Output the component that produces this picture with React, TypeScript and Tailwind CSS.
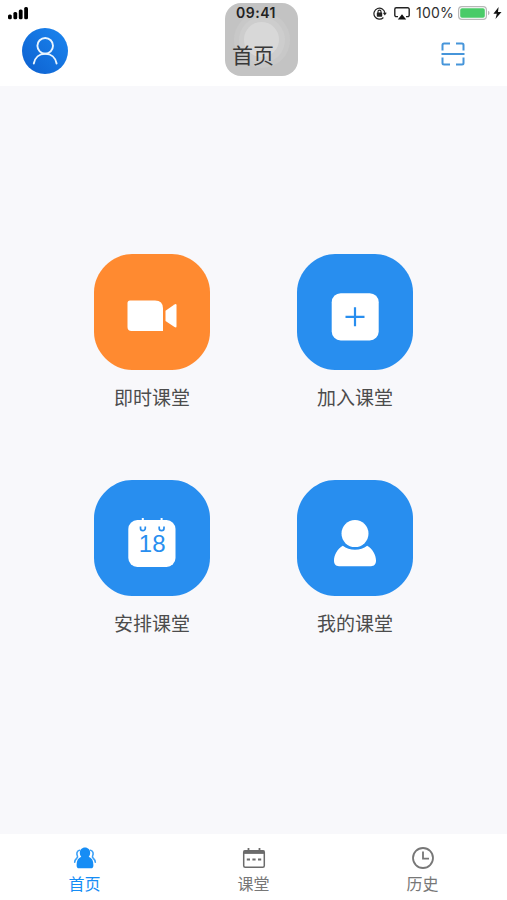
import type { ReactNode } from "react";

const BLUE = "#288eef";

function Signal() {
  return (
    <svg width="20" height="13" viewBox="0 0 20 13" fill="#000">
      <rect x="0" y="7.4" width="3.8" height="4.8" rx="1.5" />
      <rect x="5.4" y="5" width="3.8" height="7.2" rx="1.5" />
      <rect x="10.8" y="2.6" width="3.8" height="9.6" rx="1.5" />
      <rect x="16.2" y="0" width="3.8" height="12.2" rx="1.5" />
    </svg>
  );
}

function RotationLock() {
  return (
    <svg width="14" height="13" viewBox="0 0 14 13" fill="none" stroke="#222">
      <path d="M10.4 10.5A5.5 5.5 0 1 1 11.9 6" strokeWidth="1.2" />
      <path d="M9.8 5.8h4l-2 2.8z" fill="#222" stroke="none" />
      <rect x="3.8" y="5.5" width="5.4" height="4.2" rx=".6" fill="#222" stroke="none" />
      <path d="M5 6V4.6a1.5 1.5 0 0 1 3 0V6" strokeWidth="1.1" />
    </svg>
  );
}

function AirPlay() {
  return (
    <svg width="16" height="13" viewBox="0 0 16 13">
      <path d="M4 9.6H2.2A1.4 1.4 0 0 1 .8 8.2V2.2A1.4 1.4 0 0 1 2.2.8h11.6a1.4 1.4 0 0 1 1.4 1.4v6a1.4 1.4 0 0 1-1.4 1.4H12" fill="none" stroke="#222" strokeWidth="1.4" />
      <path d="M8 7.2 12.2 12.4H3.8z" fill="#111" />
    </svg>
  );
}

function Battery() {
  return (
    <svg width="32" height="14" viewBox="0 0 32 14">
      <rect x=".6" y=".6" width="27.8" height="12.8" rx="3.3" fill="#fff" stroke="#b8b8b8" strokeWidth="1.2" />
      <rect x="2.2" y="2.2" width="24.6" height="9.6" rx="1.8" fill="#4acb68" />
      <path d="M30 4.8q1.6.6 1.6 2.2T30 9.2z" fill="#b8b8b8" />
    </svg>
  );
}

function Avatar() {
  return (
    <svg width="46" height="46" viewBox="0 0 46 46">
      <defs>
        <linearGradient id="avatar" x1="0" y1="1" x2="1" y2="0">
          <stop offset="0" stopColor="#0d60cf" />
          <stop offset="1" stopColor="#1b86f0" />
        </linearGradient>
      </defs>
      <circle cx="23" cy="23" r="23" fill="url(#avatar)" />
      <g fill="none" stroke="#e9f5ff" strokeWidth="1.9" strokeLinecap="round">
        <circle cx="23.2" cy="17.8" r="7.8" />
        <path d="M11.8 35.5c1-6 5.5-9.8 11.4-9.8s10.4 3.8 11.4 9.8" />
      </g>
    </svg>
  );
}

function Scan() {
  return (
    <svg width="24" height="24" viewBox="0 0 24 24" fill="none" stroke="#4695da" strokeWidth="2">
      <path d="M9 1.5H3Q1.5 1.5 1.5 3v5.5M15 1.5h6q1.5 0 1.5 1.5v5.5M1.5 15.5V21q0 1.500 1.500 1.500h6M15 22.5h6q1.500 0 1.500-1.500v-5.500M.5 12h23" />
    </svg>
  );
}

function Tile({ label, color, children }: { label: string; color: string; children: ReactNode }) {
  return (
    <button className="flex w-[116px] flex-col items-center">
      <svg width="116" height="116" viewBox="0 0 116 116">
        <path
          d="M38 0H78C98 0 116 18 116 38V78C116 98 98 116 78 116H38C18 116 0 98 0 78V38C0 18 18 0 38 0Z"
          fill={color}
        />
        {children}
      </svg>
      <span className="mt-[15px] h-7 text-[19px] leading-7 text-[#4c4c4c]">{label}</span>
    </button>
  );
}

function HomeIcon() {
  return (
    <svg width="24" height="24" viewBox="0 0 24 24">
      <g fill="none" stroke="#3ea1f7" strokeWidth="1.6" strokeLinecap="round">
        <path d="M6.5 4.200C3.800 4.800 3.300 7.800 4.400 9.800c.5 1 .2 1.600-.6 2.300C2.600 13.200 1.800 14.500 1.700 16.200" />
        <path d="M17.500 4.200c2.700.6 3.200 3.600 2.100 5.600-.5 1-.2 1.600.6 2.300 1.200 1.100 2 2.400 2.100 4.100" />
      </g>
      <path d="M12 1.500c3.100 0 5.200 2.300 5.200 5.200 0 1.700-.6 3-1.500 4 3.200 1.200 4.700 3.700 4.700 8.200 0 2.400-.7 3.400-2.500 3.400H6.100c-1.800 0-2.500-1-2.500-3.400 0-4.500 1.500-7 4.700-8.200-.9-1-1.500-2.300-1.500-4C6.800 3.800 8.900 1.500 12 1.500z" fill="#168df5" />
    </svg>
  );
}

function CalendarIcon() {
  return (
    <svg width="24" height="24" viewBox="0 0 24 24" fill="none" stroke="#6b6b6b">
      <rect x="1.7" y="4.7" width="20.6" height="16.6" rx="1.5" strokeWidth="1.5" />
      <path d="M1.7 6.2h20.6" strokeWidth="3.4" />
      <path d="M6.5 2v4M17.5 2v4" strokeWidth="1.8" />
      <path d="M4.800 13.500h3.200M10.400 13.500h3.200M16 13.500h3.200" strokeWidth="1.8" />
    </svg>
  );
}

function ClockIcon() {
  return (
    <svg width="24" height="24" viewBox="0 0 24 24" fill="none" stroke="#777" strokeWidth="1.8">
      <circle cx="12" cy="12" r="10" />
      <path d="M12 5.5v7.2h6" />
    </svg>
  );
}

function Tab({ label, active, children }: { label: string; active?: boolean; children: ReactNode }) {
  return (
    <button className={`flex flex-1 flex-col items-center pt-3 ${active ? "text-[#168df5]" : "text-[#777777]"}`}>
      {children}
      <span className="mt-0.5 text-[16px] leading-6">{label}</span>
    </button>
  );
}

export default function App() {
  return (
    <div className="flex h-[900px] w-[507px] flex-col overflow-hidden bg-[#f8f8fb] font-['Inter','Noto_Sans_CJK_SC',sans-serif]">
      <header className="relative h-[86px] shrink-0 bg-white">
        <div className="absolute left-[225px] top-[3px] flex h-[73px] w-[73px] items-center justify-center rounded-[16px] bg-[#c3c3c3]">
          <div className="flex size-[56px] items-center justify-center rounded-full bg-[#c8c8c8]">
            <div className="flex size-[46px] items-center justify-center rounded-full bg-[#cdcdcd]">
              <div className="size-[35px] rounded-full bg-[#d8d8d8]" />
            </div>
          </div>
        </div>
        <div className="relative grid h-[26px] grid-cols-3 items-center pl-[8px] pr-[5px]">
          <Signal />
          <span className="ml-[2px] justify-self-center text-[14px] font-semibold leading-5 tracking-[0.5px] text-[#222]">09:41</span>
          <div className="flex items-center justify-end">
            <RotationLock />
            <span className="ml-[7px]"><AirPlay /></span>
            <span className="ml-[6px] w-[39px] whitespace-nowrap text-[14px] leading-5 tracking-[0.2px] text-[#303030]">100%</span>
            <span className="ml-[3px]"><Battery /></span>
            <svg className="ml-[3px]" width="9" height="12" viewBox="0 0 9 12"><path d="M5.6 0 .4 6.700h3.400L2.500 12l6-7H5z" fill="#111" /></svg>
          </div>
        </div>
        <div className="relative flex h-[60px] justify-between pl-[22px] pr-[42px]">
          <div className="mt-[2px]"><Avatar /></div>
          <h1 className="-ml-[3px] mt-[14px] text-[21px] leading-8 text-[#383838]">首页</h1>
          <div className="mt-[16px]"><Scan /></div>
        </div>
      </header>

      <main className="grid flex-1 grid-cols-[116px_116px] content-start justify-center gap-x-[87px] gap-y-[67px] pt-[168px]">
        <Tile label="即时课堂" color="#ff8a30">
          <path d="M36 46.5H61q8 0 8 8V77H37.500q-4 0-4-4V49q0-2.500 2.500-2.500z" fill="#fff" />
          <path d="M71.5 56.8 80.5 50.5q2-1.200 2 .8V72.300q0 2-2 .8L71.500 67z" fill="#fff" />
        </Tile>
        <Tile label="加入课堂" color={BLUE}>
          <rect x="34.7" y="39.2" width="47" height="47.3" rx="9" fill="#fff" />
          <path d="M48.5 62.8h19M58 53.300v19" stroke={BLUE} strokeWidth="2.2" />
        </Tile>
        <Tile label="安排课堂" color={BLUE}>
          <rect x="34.3" y="40" width="47.2" height="47" rx="9" fill="#fff" />
          <path d="M48.8 38v4M67.6 38v4" stroke="#fff" strokeWidth="2" />
          <path d="M46.5 46.5v1.800a2.400 2.400 0 0 0 4.800 0v-1.800M65.200 46.500v1.800a2.400 2.400 0 0 0 4.800 0v-1.800" fill="none" stroke={BLUE} strokeWidth="1.7" />
          <text x="58.2" y="71.8" textAnchor="middle" fontSize="24" fill={BLUE} className="font-['Liberation_Sans',sans-serif]">18</text>
        </Tile>
        <Tile label="我的课堂" color={BLUE}>
          <circle cx="58" cy="53.6" r="13.5" fill="#fff" />
          <path d="M45.8 65.7Q51 69.800 58 69.800T70.200 65.700C75.500 68.500 79 75 79 80.500 79 84.500 77 86.200 74 86.200H42C39 86.200 37 84.500 37 80.500 37 75 40.500 68.500 45.800 65.700Z" fill="#fff" />
        </Tile>
      </main>

      <nav className="flex h-[66px] shrink-0 bg-white">
        <Tab label="首页" active><HomeIcon /></Tab>
        <Tab label="课堂"><CalendarIcon /></Tab>
        <Tab label="历史"><ClockIcon /></Tab>
      </nav>
    </div>
  );
}
